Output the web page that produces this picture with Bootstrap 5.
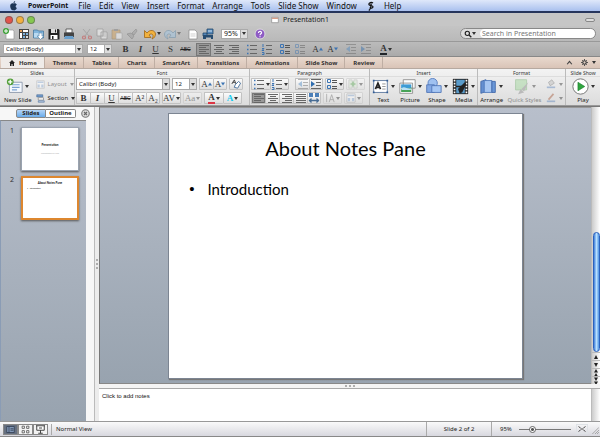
<!DOCTYPE html>
<html lang="en">
<head>
<meta charset="utf-8">
<meta name="viewport" content="width=device-width, initial-scale=1">
<title>Presentation1</title>
<link href="https://cdn.jsdelivr.net/npm/bootstrap@5.3.0/dist/css/bootstrap.min.css" rel="stylesheet">
<style>
body{font-family:"Noto Sans","Open Sans",sans-serif;font-size:7px;line-height:10px;color:#222;background:#c4c4c4;overflow:hidden}
button,select,input{font-family:inherit;color:inherit}
button{border:0;background:none;padding:0}
a{color:#111;text-decoration:none}
svg{display:block;flex:none}
h1,h2,p,ul,ol{margin:0;padding:0}
.ic{width:12px;height:12px}
.ic-lg{width:17px;height:17px}
.faded{opacity:.45}
.caret{width:0;height:0;border:2px solid transparent;border-top:3px solid #333;border-bottom:0;flex:none}
.menubar{height:13px;background:linear-gradient(#dfe8fa,#a9c0ee);border-bottom:2px solid #26355c;padding-left:8px;gap:8px;font-size:8px}
.menubar svg{width:11px;height:10px}
.brand{font-weight:700;font-size:7px;padding:0 2px 0 1px}
.titlebar{height:13px;background:#c6c6c6;padding:0 5px;font-size:7px}
.side{width:60px}
.light{width:8px;height:8px;border-radius:50%;margin-right:3px;border:1px solid #5558}
.red{background:#e2524a}.amber{background:#f3b040}.green{background:#86c850}
.pill{width:10px;height:4px;border:1px solid #888;border-radius:3px;background:#ddd}
.tools{height:15px;background:linear-gradient(#c4c4c4,#b9b9b9);padding:0 4px 0 1px}
.format{height:16px;background:linear-gradient(#bbb,#aaa);border-top:1px solid #999;border-bottom:1px solid #888;padding-left:3px}
.tool{width:15px;height:13px;display:flex;align-items:center;justify-content:center}
.tool.wide{width:20px;gap:1px}
.set{display:flex;margin-right:3px}
.pick{display:flex;height:10px;background:#fff;border:1px solid #aaa}
.pick select{appearance:none;border:0;background:#fff;padding:0 0 0 2px;font-size:7px;line-height:8px;width:100%;min-width:0;outline:0}
.pick span{width:7px;background:#ddd;border-left:1px solid #aaa;display:flex;align-items:center;justify-content:center;flex:none}
.pick .caret{display:block;width:0;background:none;border:2px solid transparent;border-top:3px solid #333;border-bottom:0}
.pick-font{width:80px}.pick-size{width:25px;margin:0 6px 0 4px}.pick-zoom{width:27px;margin:0 4px 0 3px}
.format .pick select{font-size:6px}
.glyph{font-family:"Liberation Serif",serif;font-size:9px;line-height:12px;font-weight:700;color:#333}
.struck{font-size:5px;text-decoration:line-through;font-family:"Liberation Sans",sans-serif}
.on{background:#999;box-shadow:inset 0 0 0 1px #777}
.find{width:136px;height:11px;border:1px solid #888;border-radius:6px;background:#ddd;padding-left:3px;overflow:hidden}
.find input{border:0;border-radius:5px;padding:0 2px;font-size:7px;line-height:9px;height:9px;min-width:0;flex:1;background:#fff;outline:0}
.find input::placeholder{color:#777}
.tabs{height:12px;background:linear-gradient(#e9d9ce,#d9c4b7);border-bottom:1px solid #b6a9a0;padding-left:1px}
.tabs button{font-weight:700;font-size:6px;line-height:10px;padding:0 7px 0 8px;border-right:1px solid #bfaea3;height:11px;color:#333;display:flex;align-items:center;gap:4px}
.tabs button.current{background:#efebe8}
.tabs .end{border:0;padding:0 4px}
.ribbon{display:grid;grid-template-columns:75fr 175fr 120fr 108fr 88fr 34fr;height:37px;background:linear-gradient(#f3f3f3,#dcdcdc);border-bottom:1px solid #999}
.group{border-right:1px solid #bbb;min-width:0}
.group h2{font-size:5px;line-height:6px;font-weight:400;text-align:center;border-bottom:1px solid #ddd;padding-top:1px;color:#333}
.line{display:flex;height:14px;align-items:center;gap:2px;padding:0 1px}
.cell{height:12px;width:14px;border:1px solid #c2c2c2;border-radius:1px;background:linear-gradient(#fbfbfb,#dedede);display:flex;align-items:center;justify-content:center}
.cell.wide{width:19px;gap:1px}
.joined{display:flex}
.joined .cell{border-right-width:0}
.joined .cell:last-child{border-right-width:1px}
.cell.on{background:#999}
.rf{width:94px}.rs{width:25px}
.line .pick{height:12px}.line .pick select{line-height:10px;font-size:6px}
.big{display:flex;flex-direction:column;align-items:center;font-size:6px;line-height:8px;white-space:nowrap}
.big>span{display:flex;align-items:center;gap:2px;height:19px}
.small-cmd{display:flex;align-items:center;gap:3px;font-size:6px;height:14px}
.work{background:#ececec;border-top:1px solid #777}
.panel{width:95px;border-right:1px solid #bbb;background:#f7f7f7}
.switch{height:13px;padding:0 4px 0 16px}
.switch .seg{width:30px;height:9px;border:1px solid #888;font-size:6px;line-height:7px;font-weight:700;background:#fff}
.switch .picked{background:linear-gradient(#b5d5f7,#6aabea);border-radius:2px 0 0 2px}
.seg+.seg{border-left:0;border-radius:0 2px 2px 0}
.shade{background:linear-gradient(#b8bfcb,#98a3af)}
.thumbs{list-style:none;border-top:1px solid #888;margin-right:8px;border-left:1px solid #8a9cb5;padding:6px 0 0 9px}
.thumbs li{display:flex;gap:6px;margin-bottom:5px;color:#333;line-height:8px}
.thumbs li>span{width:5px}
.mini{width:58px;height:44px;background:#fff;border:1px solid #9aa3b0;box-shadow:0 1px 2px #555;font-size:3px;line-height:4px;text-align:center;color:#111;font-family:Lato,sans-serif}
.mini.chosen{border:2px solid #dd872f;padding-top:3px}
.mini .sub{color:#aaa;font-size:2px}
.mini .pt{text-align:left;padding:1px 4px;font-size:2px}
.gutter{width:4px}
.dots{display:flex;gap:2px}
.dots i{width:2px;height:2px;border-radius:50%;background:#999}
.stage{border-left:1px solid #777;border-bottom:1px solid #888;border-top:1px solid #999}
.slide{height:calc(100% - 9px);aspect-ratio:4/3;background:#fff;border:1px solid #7c8592;box-shadow:1px 1px 1px #777;color:#000;font-family:Lato,sans-serif}
.slide h1{font-size:20px;line-height:26px;font-weight:400;text-align:center;padding-top:21px}
.slide ul{list-style:none;font-size:15px;line-height:20px;padding:18px 0 0 20px}
.slide li{display:flex;gap:13px}
.slide li::before{content:"•";font-family:"Liberation Sans",sans-serif}
.vscroll{width:9px;background:linear-gradient(90deg,#ccc,#fff);border-left:1px solid #bbb;display:flex;flex-direction:column;align-items:center}
.knob{width:7px;height:120px;border-radius:4px;margin-top:auto;border:1px solid #2b61bd;background:linear-gradient(90deg,#3f7fd9,#b9e0ff 50%,#4d93e4)}
.arrow{width:8px;height:8px;border-top:1px solid #bbb}
.split{height:5px;background:#f4f4f4;border-bottom:1px solid #aaa}
.notes{height:32px}
.notes textarea{border:0;resize:none;padding:1px 3px;font:6px/12px "Liberation Sans",sans-serif;outline:0;background:#fff}
.notes textarea::placeholder{color:#111}
.status{height:16px;background:linear-gradient(#fafafa,#d8d8df);border-top:1px solid #999;border-bottom:1px solid #888;font-size:6px}
.views{padding:0 3px;border-right:1px solid #aaa}
.views button{width:15px;height:11px;border:1px solid #888;display:flex;align-items:center;justify-content:center;background:#f3f3f3}
.views button.picked{background:#667080}
.count{width:66px;border:1px solid #aaa;border-width:0 1px;text-align:center;line-height:14px}
.zoomer{width:108px;padding:0 1px 0 8px}
.zoomer input{appearance:none;width:52px;height:9px;margin:0 5px 0 7px;background:linear-gradient(transparent 4px,#777 4px,#777 5px,transparent 5px)}
.zoomer input::-webkit-slider-thumb{appearance:none;width:7px;height:7px;border-radius:50%;background:radial-gradient(#555 1px,#fff 2px);border:1px solid #666}
</style>
</head>
<body class="vh-100 d-flex flex-column">
<svg width="0" height="0" class="position-absolute" aria-hidden="true">
<defs>
<symbol id="apple" viewBox="0 0 12 12"><path fill="#1d3657" d="M6 3C4.500 2.300 2 3 2 6s2 6 4 5c2 1 3.500-1 4-2.500-2-1-1.800-3.300 0-4C9 2.700 7.200 2.500 6 3zM6 2.500C6 1 7 .2 8 0c0 1.500-.8 2.400-2 2.500z"/></symbol>
<symbol id="script" viewBox="0 0 12 12"><path fill="none" stroke="#111" stroke-width="1.500" d="M9 2.500C7 1 4 2 4 4s5 1 5 3-3 2-4 1M7 3C6 6 7 9 4 11.500"/></symbol>
<symbol id="doc" viewBox="0 0 12 12"><path fill="#fff" stroke="#888" stroke-width=".7" d="M2 2h6l2 2v7H2z"/><path stroke="#bbb" stroke-width=".7" d="M3.500 6h5M3.500 8h5"/></symbol>
<symbol id="deck" viewBox="0 0 12 12"><path fill="#fff" stroke="#888" d="M1 2h10v8H1z"/><path fill="#d9a08a" d="M1.500 2.500h9v2h-9z"/></symbol>
<symbol id="newdoc" viewBox="0 0 12 12"><path fill="#fff" stroke="#999" stroke-width=".7" d="M3 2h7l1 1v8H3z"/><circle cx="3" cy="3" r="3" fill="#3ba035"/><path stroke="#fff" d="M1 3h4M3 1v4"/></symbol>
<symbol id="gallery" viewBox="0 0 12 12"><path fill="#444" d="M1 1h10v10H1z"/><path fill="#e5a05d" d="M2 2h2v2H2z"/><path fill="#fff" d="M5 2h5v2H5zM2 5h2v5H2z"/><path fill="#7bb0dc" d="M5 5h2v2H5zM8 5h2v2H8zM5 8h2v2H5z"/><path fill="#ddd" d="M8 8h2v2H8z"/></symbol>
<symbol id="folder" viewBox="0 0 12 12"><path fill="#82b6dd" stroke="#3e7198" stroke-width=".7" d="M.5 2h4l1 1h5v7H.5z"/><path fill="#b9daf1" d="M1 5h9v4.500H1z"/><path fill="#fff" stroke="#4a7da5" stroke-width=".6" d="M6 5h3v3h2L7.500 11.500 4 8h2z"/></symbol>
<symbol id="save" viewBox="0 0 12 12"><path fill="#222" d="M.5 1h10l1 1v9.500H.5z"/><path fill="#ddd" d="M3 1h6v4H3z"/><path fill="#fff" d="M2.500 7h7v4h-7z"/><path fill="#222" d="M7 1.500h1v3H7zM4 8h1.500v3H4z"/></symbol>
<symbol id="print" viewBox="0 0 12 12"><path fill="#fff" stroke="#444" stroke-width=".8" d="M3 1h6v4H3z"/><path fill="#444" d="M1 4.500h10V9H1z"/><path fill="#6aa0cd" d="M2 8h8l1 3H1z"/></symbol>
<symbol id="cut" viewBox="0 0 12 12"><path stroke="#888" d="m2 1 6 7m1-7L4 8"/><g fill="none" stroke="#c33" stroke-width="1.200"><circle cx="3" cy="9.500" r="1.500"/><circle cx="9" cy="9.500" r="1.500"/></g></symbol>
<symbol id="copy" viewBox="0 0 12 12"><path fill="#fff" stroke="#777" stroke-width=".8" d="M1 1h6v7H1zM5 4h6v7H5z"/><path stroke="#999" stroke-width=".7" d="M6 6h4M6 8h4"/></symbol>
<symbol id="paste" viewBox="0 0 12 12"><path fill="#d8a152" stroke="#8c6a39" stroke-width=".7" d="M1 2h8v9H1z"/><path fill="#777" d="M3 1h4v2H3z"/><path fill="#fff" stroke="#888" stroke-width=".6" d="M5 5h6v6H5z"/></symbol>
<symbol id="brush" viewBox="0 0 12 12"><path fill="#999" stroke="#555" stroke-width=".6" d="M10 1 6 5l2 2 3-4zM1 6l4-1 3 3-2 3z"/></symbol>
<symbol id="undo" viewBox="0 0 12 12"><path fill="#f2b23e" stroke="#a16716" stroke-width=".8" d="M.5 2.500 3 5c3-4 8-3 8.500 1 0 2-1 4-3.500 5 1-2 1.500-3.500.5-4.500S6 6 5 7l2 2.500H.5z"/></symbol>
<symbol id="redo" viewBox="0 0 12 12"><path fill="#9ec7e8" stroke="#4c7da2" stroke-width=".8" d="M11.500 2.500 9 5C6 1 1 2 .5 6c0 2 1 4 3.500 5-1-2-1.500-3.500-.5-4.500S6 6 7 7L5 9.500h6.500z"/></symbol>
<symbol id="media-set" viewBox="0 0 12 12"><path fill="#5688b9" stroke="#214769" stroke-width=".8" d="M5 1h6v5H5zM1 5h4v3H1z"/><path fill="#274c70" d="M1 7h10v4H9V9.500H4V11H1z"/><path stroke="#cfe4f5" d="M6 3h4"/></symbol>
<symbol id="help" viewBox="0 0 12 12"><circle cx="6" cy="6" r="5" fill="#8e5bc4" stroke="#ddd"/><path fill="none" stroke="#fff" stroke-width="1.200" d="M4.500 5c0-2.500 3.500-2 3 0-.3.800-1.500 1-1.500 2.200M6 8.300v1"/></symbol>
<symbol id="lens" viewBox="0 0 12 12"><circle cx="5" cy="5" r="3.200" fill="none" stroke="#222" stroke-width="1.700"/><path stroke="#222" stroke-width="2" d="m7.500 7.500 3.500 3.500"/></symbol>
<symbol id="al" viewBox="0 0 12 12"><path stroke="#666" d="M1 2.500h10M1 4.500h7M1 6.500h10M1 8.500h7M1 10.500h10"/></symbol>
<symbol id="ac" viewBox="0 0 12 12"><path stroke="#666" d="M1 2.500h10M3 4.500h6M1 6.500h10M3 8.500h6M1 10.500h10"/></symbol>
<symbol id="ar" viewBox="0 0 12 12"><path stroke="#666" d="M1 2.500h10M4 4.500h7M1 6.500h10M4 8.500h7M1 10.500h10"/></symbol>
<symbol id="aj" viewBox="0 0 12 12"><path stroke="#666" d="M1 2.500h10M1 4.500h10M1 6.500h10M1 8.500h10M1 10.500h10"/></symbol>
<symbol id="bul" viewBox="0 0 12 12"><path stroke="#666" d="M4 2.500h7M4 6.500h7M4 10.500h7"/><path stroke="#3d74b3" stroke-width="1.600" d="M1 2.500h1.500M1 6.500h1.500M1 10.500h1.500"/></symbol>
<symbol id="num" viewBox="0 0 12 12"><path stroke="#666" d="M5 2.500h6M5 6.500h6M5 10.500h6"/><path fill="none" stroke="#3d74b3" d="M2 1v3M1 5.500h2L1 7.500h2M1 9.500h2v2H1"/></symbol>
<symbol id="spac" viewBox="0 0 12 12"><path fill="none" stroke="#3d74b3" d="M1.500 1.500h3v3h-3zM1.500 7.500h3v3h-3z"/><path stroke="#555" d="M6 2.500h5M6 4.500h5M6 8.500h5M6 10.500h5"/></symbol>
<symbol id="ded" viewBox="0 0 12 12"><path stroke="#666" d="M1 1.500h10M6 4.500h5M6 7.500h5M1 10.500h10"/><path fill="#4e8ac4" d="M5 3v6L1 6z"/></symbol>
<symbol id="ind" viewBox="0 0 12 12"><path stroke="#666" d="M1 1.500h10M6 4.500h5M6 7.500h5M1 10.500h10"/><path fill="#2f6daf" d="M1 3v6l4-3z"/></symbol>
<symbol id="wide-al" viewBox="0 0 12 12"><path fill="#4b7fb8" d="M1 1h4v4H1zM7 1h4v4H7z"/><path fill="none" stroke="#476c94" stroke-width="1.300" d="M1 8.500h10M3.500 6.500l-2 2 2 2M8.500 6.500l2 2-2 2"/></symbol>
<symbol id="column" viewBox="0 0 12 12"><path fill="#d7e8d2" stroke="#888" stroke-width=".6" d="M1 1h4v10H1zM7 1h4v10H7z"/><path stroke="#4ea046" stroke-width="2" d="M3 6h6M6 3v6"/></symbol>
<symbol id="tdir" viewBox="0 0 12 12"><path fill="none" stroke="#666" d="M2 1v10M5 11l3-9 3 9M6 8h4"/></symbol>
<symbol id="erase" viewBox="0 0 12 12"><path fill="none" stroke="#333" d="m1 6 3-5 2 5M2 4h3"/><path fill="#fff" stroke="#356293" d="m5 7 4-4 2.500 2L8 11 4 10z"/></symbol>
<symbol id="house" viewBox="0 0 12 12"><path fill="#222" d="M6 0 0 6h2v6h3V8h2v4h3V6h2z"/></symbol>
<symbol id="gear" viewBox="0 0 12 12"><circle cx="6" cy="6" r="3" fill="none" stroke="#444" stroke-width="2"/><path stroke="#444" stroke-width="1.500" d="M6 0v3M6 9v3M0 6h3M9 6h3M2 2l2 2M8 8l2 2M10 2 8 4M4 8l-2 2"/></symbol>
<symbol id="up" viewBox="0 0 12 12"><path fill="none" stroke="#444" stroke-width="2" d="m2 9 4-5 4 5"/></symbol>
<symbol id="newslide" viewBox="0 0 20 20"><path fill="#f4f8fd" stroke="#8794a8" d="M4 5h15v12H4z"/><path stroke="#7ba2d2" stroke-width="1.300" d="M7 8h9M7 11h9M7 14h6"/><circle cx="5" cy="4.500" r="4" fill="#54a03b"/><path stroke="#fff" stroke-width="1.500" d="M2.500 4.500h5M5 2v5"/></symbol>
<symbol id="layout" viewBox="0 0 12 12"><path fill="#fff" stroke="#777" stroke-width=".7" d="M1 1h10v10H1z"/><path fill="#8bacd4" d="M2 2h8v2H2zM2 6h3v4H2zM7 6h3v4H7z"/></symbol>
<symbol id="section" viewBox="0 0 12 12"><path fill="#739dcd" stroke="#3b5f8b" stroke-width=".7" d="M1 1h8v3H1z"/><path fill="#fff" stroke="#666" stroke-width=".7" d="M3 5h7v3H3z"/><path fill="#b8cde5" stroke="#456a98" stroke-width=".7" d="M3 9h8v2H3z"/></symbol>
<symbol id="textbox" viewBox="0 0 20 20"><path fill="#fff" stroke="#526f98" d="M2 3h16v14H2z"/><path fill="none" stroke="#222" stroke-width="2" d="m4 13 3-7 3 7M5 11h4"/><path stroke="#888" d="M12 7h4M12 10h4M12 13h4"/><path fill="#335d95" d="M1 2h2v2H1zM17 2h2v2h-2zM1 16h2v2H1zM17 16h2v2h-2z"/></symbol>
<symbol id="picture" viewBox="0 0 20 20"><path fill="#fff" stroke="#888" d="M5 2h14v10H5zM1 6h15v12H1z"/><path fill="#3d9bd5" d="M2.500 7.500h12V12h-12z"/><path fill="#48a357" d="M2.500 13c4-4 8 1 12-2v5.500h-12z"/><path fill="#b9e1f7" d="M3 12c4-3 7 2 11 0v2H3z"/></symbol>
<symbol id="shape" viewBox="0 0 20 20"><circle cx="9" cy="6" r="5.500" fill="#9fc1f0" stroke="#5279bd"/><path fill="#84a9e4" stroke="#4c72b5" d="M2 8h9v9H2z"/><path fill="#a6c7f4" stroke="#4c72b5" d="M8 9h11v8H8z"/></symbol>
<symbol id="media" viewBox="0 0 20 20"><path fill="#222" d="M1 1h18v18H1z"/><path fill="#5a9ccb" d="M5 2h10v7H5zM5 11h10v7H5z"/><path stroke="#fff" stroke-width="2" stroke-dasharray="2 1.500" d="M3 2v16M17 2v16"/><path fill="#222" d="m7 13 8-8 2 2-5 10-3 1z"/></symbol>
<symbol id="arrange" viewBox="0 0 20 20"><path fill="#648fd0" stroke="#3e66a6" d="M1 4 7 2v14l-6 2z"/><path fill="#a5c5f1" stroke="#4c77ba" d="M5 3h9v14H5z"/><path fill="#6997d8" stroke="#3e66a6" d="M14 4h4v13h-4z"/></symbol>
<symbol id="quick" viewBox="0 0 20 20"><path fill="#9cd597" stroke="#69aa64" d="M3 2h13v12H3z"/><path fill="#888" d="m18 5-8 8 3 3zM9 13l4 4-7 2z"/></symbol>
<symbol id="fill" viewBox="0 0 12 12"><path fill="#bbb" stroke="#555" stroke-width=".8" d="m3 4 4-3 3 4-5 3z"/><path fill="#5c84bb" d="M1 9h10v2H1z"/></symbol>
<symbol id="pen" viewBox="0 0 12 12"><path stroke="#a75a3a" stroke-width="2" d="m3 8 6-7"/><path fill="#5c84bb" d="M1 9h10v2H1z"/></symbol>
<symbol id="play" viewBox="0 0 20 20"><circle cx="10" cy="10" r="9" fill="#fff" stroke="#666"/><path fill="#2fa63e" stroke="#17792a" stroke-width=".7" d="m7 5 8 5-8 5z"/></symbol>
<symbol id="close" viewBox="0 0 12 12"><circle cx="6" cy="6" r="5" fill="#ddd" stroke="#777" stroke-width="1.500"/><path stroke="#666" stroke-width="1.500" d="m4 4 4 4m0-4L4 8"/></symbol>
<symbol id="v1" viewBox="0 0 12 12"><path fill="#8298b7" stroke="#2d3a4e" d="M1 2h10v8H1z"/><path stroke="#2d3a4e" d="M4 2v8M6 5h4M6 7h4"/></symbol>
<symbol id="v2" viewBox="0 0 12 12"><path fill="#fff" stroke="#444" d="M1.500 1.500h3v3h-3zM7.500 1.500h3v3h-3zM1.500 7.500h3v3h-3zM7.500 7.500h3v3h-3z"/></symbol>
<symbol id="v3" viewBox="0 0 12 12"><path fill="#fff" stroke="#333" stroke-width="1.200" d="M0 1h12M1 1v6h10V1M6 7v4M3 11h6M4 4h4"/></symbol>
<symbol id="fit" viewBox="0 0 12 12"><path stroke="#333" stroke-width="1.500" d="m1 2 3 3m7-3L8 5M1 10l3-3m7 3L8 7"/><path fill="#777" d="M4 5h4v2H4z"/></symbol>
<symbol id="grip" viewBox="0 0 12 12"><path stroke="#888" d="M2 12 12 2M6 12l6-6M9 12l3-3"/></symbol>
<symbol id="tri-u" viewBox="0 0 8 8"><path fill="#222" d="m4 2 2 4H2z"/></symbol>
<symbol id="tri-d" viewBox="0 0 8 8"><path fill="#222" d="m4 6 2-4H2z"/></symbol>
<symbol id="grow" viewBox="0 0 8 8"><path fill="#3d74b3" d="m4 1 4 6H0z"/></symbol>
<symbol id="shrink" viewBox="0 0 8 8"><path fill="#3d74b3" d="m4 7 4-6H0z"/></symbol>
<symbol id="dbl-u" viewBox="0 0 8 8"><path fill="#222" d="m4 0 2 3.500H2zM4 4l2 3.500H2z"/></symbol>
<symbol id="dbl-d" viewBox="0 0 8 8"><path fill="#222" d="m4 4 2-3.500H2zM4 8l2-3.500H2z"/></symbol>
</defs>
</svg>

<nav class="menubar d-flex align-items-center flex-shrink-0">
<a href="#" aria-label="Apple menu"><svg><use href="#apple"/></svg></a>
<a href="#" class="brand">PowerPoint</a><a href="#">File</a><a href="#">Edit</a><a href="#">View</a><a href="#">Insert</a><a href="#">Format</a><a href="#">Arrange</a><a href="#">Tools</a><a href="#">Slide Show</a><a href="#">Window</a>
<a href="#" aria-label="Scripts"><svg><use href="#script"/></svg></a><a href="#">Help</a>
</nav>

<header class="titlebar d-flex align-items-center justify-content-between flex-shrink-0">
<div class="side d-flex"><button class="light red" aria-label="Close"></button><button class="light amber" aria-label="Minimize"></button><button class="light green" aria-label="Zoom"></button></div>
<div class="d-flex align-items-center gap-1"><svg width="8" height="8"><use href="#deck"/></svg><span>Presentation1</span></div>
<div class="side d-flex justify-content-end"><button class="pill" aria-label="Toggle toolbar"></button></div>
</header>

<div class="tools d-flex align-items-center flex-shrink-0">
<div class="set"><button class="tool" aria-label="New"><svg class="ic"><use href="#newdoc"/></svg></button><button class="tool" aria-label="Gallery"><svg class="ic"><use href="#gallery"/></svg></button><button class="tool" aria-label="Open"><svg class="ic"><use href="#folder"/></svg></button><button class="tool" aria-label="Save"><svg class="ic"><use href="#save"/></svg></button><button class="tool" aria-label="Print"><svg class="ic"><use href="#print"/></svg></button></div>
<div class="set faded"><button class="tool" aria-label="Cut"><svg class="ic"><use href="#cut"/></svg></button><button class="tool" aria-label="Copy"><svg class="ic"><use href="#copy"/></svg></button><button class="tool" aria-label="Paste"><svg class="ic"><use href="#paste"/></svg></button><button class="tool" aria-label="Format painter"><svg class="ic"><use href="#brush"/></svg></button></div>
<div class="set"><button class="tool wide" aria-label="Undo"><svg class="ic"><use href="#undo"/></svg><span class="caret"></span></button><button class="tool wide faded" aria-label="Redo"><svg class="ic"><use href="#redo"/></svg><span class="caret"></span></button></div>
<div class="set"><button class="tool" aria-label="New slide"><svg class="ic"><use href="#doc"/></svg></button><button class="tool" aria-label="Media browser"><svg class="ic"><use href="#media-set"/></svg></button></div>
<label class="pick pick-zoom"><select aria-label="Zoom"><option>95%</option></select><span><i class="caret"></i></span></label>
<button class="tool" aria-label="Help"><svg class="ic"><use href="#help"/></svg></button>
<label class="find d-flex align-items-center ms-auto"><svg width="8" height="8"><use href="#lens"/></svg><span class="caret me-1"></span><input type="search" placeholder="Search in Presentation" aria-label="Search in Presentation"></label>
</div>

<div class="format d-flex align-items-center flex-shrink-0">
<label class="pick pick-font"><select aria-label="Font"><option>Calibri (Body)</option></select><span><i class="caret"></i></span></label>
<label class="pick pick-size"><select aria-label="Font size"><option>12</option></select><span><i class="caret"></i></span></label>
<div class="set"><button class="tool glyph">B</button><button class="tool glyph fst-italic">I</button><button class="tool glyph text-decoration-underline fw-normal">U</button><button class="tool glyph fw-normal">S</button><button class="tool struck">ABC</button></div>
<div class="set"><button class="tool on" aria-label="Align left"><svg class="ic"><use href="#al"/></svg></button><button class="tool" aria-label="Center"><svg class="ic"><use href="#ac"/></svg></button><button class="tool" aria-label="Align right"><svg class="ic"><use href="#ar"/></svg></button></div>
<div class="set"><button class="tool" aria-label="Bullets"><svg class="ic"><use href="#bul"/></svg></button><button class="tool" aria-label="Numbering"><svg class="ic"><use href="#num"/></svg></button></div>
<div class="set"><button class="tool" aria-label="Spacing"><svg class="ic"><use href="#spac"/></svg></button><button class="tool faded" aria-label="Columns"><svg class="ic"><use href="#spac"/></svg></button></div>
<div class="set"><button class="tool glyph fw-normal">A<svg width="4" height="4"><use href="#grow"/></svg></button><button class="tool glyph fw-normal">A<svg width="4" height="4"><use href="#shrink"/></svg></button></div>
<div class="set faded"><button class="tool" aria-label="Decrease indent"><svg class="ic"><use href="#ded"/></svg></button><button class="tool" aria-label="Increase indent"><svg class="ic"><use href="#ind"/></svg></button></div>
<button class="tool wide glyph"><span class="border-bottom border-2 border-dark lh-1">A</span><span class="caret"></span></button>
</div>

<div class="tabs d-flex align-items-center flex-shrink-0">
<button class="current"><svg width="6" height="6"><use href="#house"/></svg>Home</button><button>Themes</button><button>Tables</button><button>Charts</button><button>SmartArt</button><button>Transitions</button><button>Animations</button><button>Slide Show</button><button>Review</button>
<button class="end ms-auto" aria-label="Collapse ribbon"><svg width="7" height="7"><use href="#up"/></svg></button><button class="end" aria-label="Ribbon options"><svg width="7" height="7"><use href="#gear"/></svg><span class="caret"></span></button>
</div>

<div class="ribbon flex-shrink-0">
<section class="group"><h2>Slides</h2>
<div class="d-flex gap-1 ps-1"><button class="big"><span><svg class="ic-lg"><use href="#newslide"/></svg><i class="caret"></i></span>New Slide</button>
<div><button class="small-cmd faded"><svg width="9" height="9"><use href="#layout"/></svg>Layout<span class="caret"></span></button><button class="small-cmd"><svg width="9" height="9"><use href="#section"/></svg>Section<span class="caret"></span></button></div></div>
</section>
<section class="group"><h2>Font</h2>
<div class="line"><label class="pick rf"><select aria-label="Ribbon font"><option>Calibri (Body)</option></select><span><i class="caret"></i></span></label><label class="pick rs"><select aria-label="Ribbon font size"><option>12</option></select><span><i class="caret"></i></span></label>
<div class="joined"><button class="cell glyph fw-normal">A<svg width="4" height="4"><use href="#grow"/></svg></button><button class="cell glyph fw-normal">A<svg width="4" height="4"><use href="#shrink"/></svg></button></div><button class="cell" aria-label="Clear formatting"><svg width="10" height="10"><use href="#erase"/></svg></button></div>
<div class="line"><div class="joined"><button class="cell glyph">B</button><button class="cell glyph fst-italic">I</button><button class="cell glyph fw-normal text-decoration-underline">U</button><button class="cell struck">ABC</button><button class="cell glyph fw-normal">A²</button><button class="cell glyph fw-normal">A₂</button></div>
<button class="cell wide glyph fw-normal">AV<span class="caret"></span></button><button class="cell wide glyph fw-normal faded">Aa<span class="caret"></span></button>
<div class="joined"><button class="cell wide glyph"><span class="border-bottom border-2 border-danger lh-1">A</span><span class="caret"></span></button><button class="cell wide glyph text-info">A<span class="caret"></span></button></div></div>
</section>
<section class="group"><h2>Paragraph</h2>
<div class="line"><div class="joined"><button class="cell wide" aria-label="Bulleted list"><svg width="12" height="12"><use href="#bul"/></svg><span class="caret"></span></button><button class="cell wide" aria-label="Numbered list"><svg width="12" height="12"><use href="#num"/></svg><span class="caret"></span></button></div>
<div class="joined ms-1"><button class="cell" aria-label="Outdent"><svg class="faded" width="12" height="12"><use href="#ded"/></svg></button><button class="cell" aria-label="Indent"><svg width="12" height="12"><use href="#ind"/></svg></button></div>
<button class="cell wide" aria-label="Line spacing"><svg width="12" height="12"><use href="#spac"/></svg><span class="caret"></span></button><button class="cell wide faded" aria-label="Text columns"><svg width="10" height="10"><use href="#column"/></svg><span class="caret"></span></button></div>
<div class="line"><div class="joined"><button class="cell on" aria-label="Left"><svg width="12" height="12"><use href="#al"/></svg></button><button class="cell" aria-label="Centered"><svg width="12" height="12"><use href="#ac"/></svg></button><button class="cell" aria-label="Right"><svg width="12" height="12"><use href="#ar"/></svg></button><button class="cell" aria-label="Justify"><svg width="12" height="12"><use href="#aj"/></svg></button><button class="cell" aria-label="Distribute"><svg width="12" height="12"><use href="#wide-al"/></svg></button></div>
<button class="cell wide faded" aria-label="Text direction"><svg width="10" height="10"><use href="#tdir"/></svg><span class="caret"></span></button><button class="cell wide faded" aria-label="Align text"><svg width="10" height="10"><use href="#layout"/></svg><span class="caret"></span></button></div>
</section>
<section class="group"><h2>Insert</h2>
<div class="d-flex justify-content-around"><button class="big"><span><svg class="ic-lg"><use href="#textbox"/></svg><i class="caret"></i></span>Text</button><button class="big"><span><svg class="ic-lg"><use href="#picture"/></svg><i class="caret"></i></span>Picture</button><button class="big"><span><svg class="ic-lg"><use href="#shape"/></svg><i class="caret"></i></span>Shape</button><button class="big"><span><svg class="ic-lg"><use href="#media"/></svg><i class="caret"></i></span>Media</button></div>
</section>
<section class="group"><h2>Format</h2>
<div class="d-flex justify-content-around"><button class="big"><span><svg class="ic-lg"><use href="#arrange"/></svg><i class="caret"></i></span>Arrange</button><button class="big faded"><span><svg class="ic-lg"><use href="#quick"/></svg><i class="caret"></i></span>Quick Styles</button>
<div class="faded"><button class="small-cmd" aria-label="Fill"><svg width="10" height="10"><use href="#fill"/></svg><span class="caret"></span></button><button class="small-cmd" aria-label="Line"><svg width="10" height="10"><use href="#pen"/></svg><span class="caret"></span></button></div></div>
</section>
<section class="group border-0"><h2>Slide Show</h2>
<div class="d-flex justify-content-center"><button class="big"><span><svg class="ic-lg"><use href="#play"/></svg><i class="caret"></i></span>Play</button></div>
</section>
</div>

<main class="work d-flex flex-grow-1 overflow-hidden">
<aside class="panel d-flex flex-column flex-shrink-0">
<div class="switch d-flex align-items-center"><button class="seg picked">Slides</button><button class="seg">Outline</button><button class="ms-auto" aria-label="Close pane"><svg width="9" height="9"><use href="#close"/></svg></button></div>
<ol class="thumbs shade flex-grow-1">
<li><span>1</span><div class="mini d-flex flex-column justify-content-center"><b>Presentation</b><div class="sub mt-1">Presentation by Jane</div></div></li>
<li><span>2</span><div class="mini chosen"><b>About Notes Pane</b><div class="pt">• &nbsp; Introduction</div></div></li>
</ol>
</aside>
<div class="gutter d-flex align-items-center justify-content-center"><div class="dots flex-column"><i></i><i></i><i></i></div></div>
<div class="d-flex flex-column flex-grow-1">
<div class="d-flex flex-grow-1">
<div class="stage shade flex-grow-1 d-flex align-items-center justify-content-center"><article class="slide"><h1>About Notes Pane</h1><ul><li>Introduction</li></ul></article></div>
<div class="vscroll"><div class="knob"></div><button class="arrow" aria-label="Scroll up"><svg width="8" height="8"><use href="#tri-u"/></svg></button><button class="arrow" aria-label="Scroll down"><svg width="8" height="8"><use href="#tri-d"/></svg></button><button class="arrow" aria-label="Previous slide"><svg width="8" height="8"><use href="#dbl-u"/></svg></button><button class="arrow" aria-label="Next slide"><svg width="8" height="8"><use href="#dbl-d"/></svg></button></div>
</div>
<div class="split d-flex align-items-center justify-content-center"><div class="dots"><i></i><i></i><i></i></div></div>
<div class="notes d-flex"><textarea class="flex-grow-1" aria-label="Notes" placeholder="Click to add notes"></textarea><div class="vscroll"></div></div>
</div>
</main>

<footer class="status d-flex align-items-center flex-shrink-0">
<div class="views d-flex"><button class="picked" aria-label="Normal view"><svg width="9" height="9"><use href="#v1"/></svg></button><button aria-label="Slide sorter"><svg width="9" height="9"><use href="#v2"/></svg></button><button aria-label="Slide show view"><svg width="9" height="9"><use href="#v3"/></svg></button></div>
<span class="ps-1 me-auto">Normal View</span>
<span class="count">Slide 2 of 2</span>
<div class="zoomer d-flex align-items-center"><span>95%</span><input type="range" min="10" max="400" value="95" aria-label="Zoom level"><button class="border" aria-label="Fit to window"><svg width="10" height="8"><use href="#fit"/></svg></button><svg class="ms-auto mt-auto" width="8" height="8"><use href="#grip"/></svg></div>
</footer>
<script src="https://cdn.jsdelivr.net/npm/bootstrap@5.3.0/dist/js/bootstrap.bundle.min.js"></script>
</body>
</html>
